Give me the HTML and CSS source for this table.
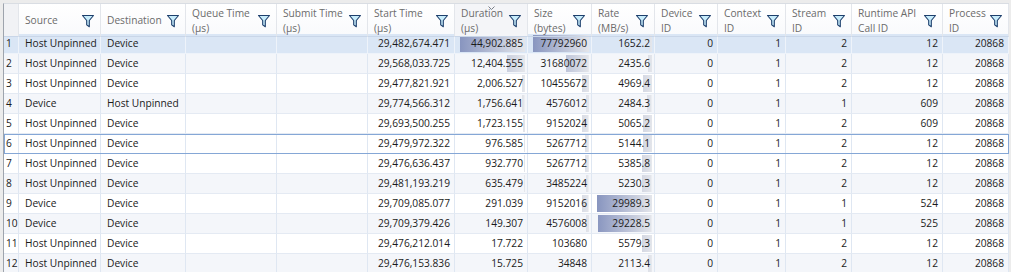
FILE: index.html
```html
<!DOCTYPE html>
<html lang="en">
<head>
    <meta charset="UTF-8">
    <title>Memcpy Transfers</title>
    <link rel="stylesheet" href="styles.css">
</head>
<body>
    <div class="grid">
        <div class="head">
            <div class="hcell corner"></div>
            <div class="hcell"><span class="htext">Source</span><svg class="filter" viewBox="0 0 14 14"><path d="M1.5 1.5h11l-4.2 5v6.2l-2.6-1.8v-4.4z"/></svg></div>
            <div class="hcell"><span class="htext">Destination</span><svg class="filter" viewBox="0 0 14 14"><path d="M1.5 1.5h11l-4.2 5v6.2l-2.6-1.8v-4.4z"/></svg></div>
            <div class="hcell"><span class="htext two">Queue Time<br>(µs)</span><svg class="filter" viewBox="0 0 14 14"><path d="M1.5 1.5h11l-4.2 5v6.2l-2.6-1.8v-4.4z"/></svg></div>
            <div class="hcell"><span class="htext two">Submit Time<br>(µs)</span><svg class="filter" viewBox="0 0 14 14"><path d="M1.5 1.5h11l-4.2 5v6.2l-2.6-1.8v-4.4z"/></svg></div>
            <div class="hcell"><span class="htext two">Start Time<br>(µs)</span><svg class="filter" viewBox="0 0 14 14"><path d="M1.5 1.5h11l-4.2 5v6.2l-2.6-1.8v-4.4z"/></svg></div>
            <div class="hcell sorted"><svg class="sort" viewBox="0 0 7 4"><path d="M0.5 0.5l3 3 3-3"/></svg><span class="htext two">Duration<br>(µs)</span><svg class="filter" viewBox="0 0 14 14"><path d="M1.5 1.5h11l-4.2 5v6.2l-2.6-1.8v-4.4z"/></svg></div>
            <div class="hcell"><span class="htext two">Size<br>(bytes)</span><svg class="filter" viewBox="0 0 14 14"><path d="M1.5 1.5h11l-4.2 5v6.2l-2.6-1.8v-4.4z"/></svg></div>
            <div class="hcell"><span class="htext two">Rate<br>(MB/s)</span><svg class="filter" viewBox="0 0 14 14"><path d="M1.5 1.5h11l-4.2 5v6.2l-2.6-1.8v-4.4z"/></svg></div>
            <div class="hcell"><span class="htext two">Device<br>ID</span><svg class="filter" viewBox="0 0 14 14"><path d="M1.5 1.5h11l-4.2 5v6.2l-2.6-1.8v-4.4z"/></svg></div>
            <div class="hcell"><span class="htext two">Context<br>ID</span><svg class="filter" viewBox="0 0 14 14"><path d="M1.5 1.5h11l-4.2 5v6.2l-2.6-1.8v-4.4z"/></svg></div>
            <div class="hcell"><span class="htext two">Stream<br>ID</span><svg class="filter" viewBox="0 0 14 14"><path d="M1.5 1.5h11l-4.2 5v6.2l-2.6-1.8v-4.4z"/></svg></div>
            <div class="hcell"><span class="htext two">Runtime API<br>Call ID</span><svg class="filter" viewBox="0 0 14 14"><path d="M1.5 1.5h11l-4.2 5v6.2l-2.6-1.8v-4.4z"/></svg></div>
            <div class="hcell"><span class="htext two">Process<br>ID</span><svg class="filter" viewBox="0 0 14 14"><path d="M1.5 1.5h11l-4.2 5v6.2l-2.6-1.8v-4.4z"/></svg></div>
        </div>

        <div class="row selected">
            <div class="cell idx">1</div><div class="cell">Host Unpinned</div><div class="cell">Device</div><div class="cell"></div><div class="cell"></div>
            <div class="cell num">29,482,674.471</div>
            <div class="cell bars dur"><span class="bar" style="width:100%"></span><span class="val">44,902.885</span></div>
            <div class="cell bars size"><span class="bar" style="width:100%"></span><span class="val">77792960</span></div>
            <div class="cell bars rate"><span class="bar" style="width:5.5%"></span><span class="val">1652.2</span></div>
            <div class="cell num">0</div><div class="cell num">1</div><div class="cell num">2</div><div class="cell num">12</div><div class="cell num">20868</div>
        </div>
        <div class="row alt">
            <div class="cell idx">2</div><div class="cell">Host Unpinned</div><div class="cell">Device</div><div class="cell"></div><div class="cell"></div>
            <div class="cell num">29,568,033.725</div>
            <div class="cell bars dur"><span class="bar" style="width:27.6%"></span><span class="val">12,404.555</span></div>
            <div class="cell bars size"><span class="bar" style="width:40.7%"></span><span class="val">31680072</span></div>
            <div class="cell bars rate"><span class="bar" style="width:8.1%"></span><span class="val">2435.6</span></div>
            <div class="cell num">0</div><div class="cell num">1</div><div class="cell num">2</div><div class="cell num">12</div><div class="cell num">20868</div>
        </div>
        <div class="row">
            <div class="cell idx">3</div><div class="cell">Host Unpinned</div><div class="cell">Device</div><div class="cell"></div><div class="cell"></div>
            <div class="cell num">29,477,821.921</div>
            <div class="cell bars dur"><span class="bar" style="width:4.5%"></span><span class="val">2,006.527</span></div>
            <div class="cell bars size"><span class="bar" style="width:13.4%"></span><span class="val">10455672</span></div>
            <div class="cell bars rate"><span class="bar" style="width:16.6%"></span><span class="val">4969.4</span></div>
            <div class="cell num">0</div><div class="cell num">1</div><div class="cell num">2</div><div class="cell num">12</div><div class="cell num">20868</div>
        </div>
        <div class="row alt">
            <div class="cell idx">4</div><div class="cell">Device</div><div class="cell">Host Unpinned</div><div class="cell"></div><div class="cell"></div>
            <div class="cell num">29,774,566.312</div>
            <div class="cell bars dur"><span class="bar" style="width:3.9%"></span><span class="val">1,756.641</span></div>
            <div class="cell bars size"><span class="bar" style="width:5.9%"></span><span class="val">4576012</span></div>
            <div class="cell bars rate"><span class="bar" style="width:8.3%"></span><span class="val">2484.3</span></div>
            <div class="cell num">0</div><div class="cell num">1</div><div class="cell num">1</div><div class="cell num">609</div><div class="cell num">20868</div>
        </div>
        <div class="row">
            <div class="cell idx">5</div><div class="cell">Host Unpinned</div><div class="cell">Device</div><div class="cell"></div><div class="cell"></div>
            <div class="cell num">29,693,500.255</div>
            <div class="cell bars dur"><span class="bar" style="width:3.8%"></span><span class="val">1,723.155</span></div>
            <div class="cell bars size"><span class="bar" style="width:11.8%"></span><span class="val">9152024</span></div>
            <div class="cell bars rate"><span class="bar" style="width:16.9%"></span><span class="val">5065.2</span></div>
            <div class="cell num">0</div><div class="cell num">1</div><div class="cell num">2</div><div class="cell num">609</div><div class="cell num">20868</div>
        </div>
        <div class="row focus">
            <div class="cell idx">6</div><div class="cell">Host Unpinned</div><div class="cell">Device</div><div class="cell"></div><div class="cell"></div>
            <div class="cell num">29,479,972.322</div>
            <div class="cell bars dur"><span class="bar" style="width:2.2%"></span><span class="val">976.585</span></div>
            <div class="cell bars size"><span class="bar" style="width:6.8%"></span><span class="val">5267712</span></div>
            <div class="cell bars rate"><span class="bar" style="width:17.2%"></span><span class="val">5144.1</span></div>
            <div class="cell num">0</div><div class="cell num">1</div><div class="cell num">2</div><div class="cell num">12</div><div class="cell num">20868</div>
        </div>
        <div class="row">
            <div class="cell idx">7</div><div class="cell">Host Unpinned</div><div class="cell">Device</div><div class="cell"></div><div class="cell"></div>
            <div class="cell num">29,476,636.437</div>
            <div class="cell bars dur"><span class="bar" style="width:2.1%"></span><span class="val">932.770</span></div>
            <div class="cell bars size"><span class="bar" style="width:6.8%"></span><span class="val">5267712</span></div>
            <div class="cell bars rate"><span class="bar" style="width:18%"></span><span class="val">5385.8</span></div>
            <div class="cell num">0</div><div class="cell num">1</div><div class="cell num">2</div><div class="cell num">12</div><div class="cell num">20868</div>
        </div>
        <div class="row alt">
            <div class="cell idx">8</div><div class="cell">Host Unpinned</div><div class="cell">Device</div><div class="cell"></div><div class="cell"></div>
            <div class="cell num">29,481,193.219</div>
            <div class="cell bars dur"><span class="bar" style="width:1.4%"></span><span class="val">635.479</span></div>
            <div class="cell bars size"><span class="bar" style="width:4.5%"></span><span class="val">3485224</span></div>
            <div class="cell bars rate"><span class="bar" style="width:17.4%"></span><span class="val">5230.3</span></div>
            <div class="cell num">0</div><div class="cell num">1</div><div class="cell num">2</div><div class="cell num">12</div><div class="cell num">20868</div>
        </div>
        <div class="row">
            <div class="cell idx">9</div><div class="cell">Device</div><div class="cell">Device</div><div class="cell"></div><div class="cell"></div>
            <div class="cell num">29,709,085.077</div>
            <div class="cell bars dur"><span class="bar" style="width:0.6%"></span><span class="val">291.039</span></div>
            <div class="cell bars size"><span class="bar" style="width:11.8%"></span><span class="val">9152016</span></div>
            <div class="cell bars rate"><span class="bar" style="width:100%"></span><span class="val">29989.3</span></div>
            <div class="cell num">0</div><div class="cell num">1</div><div class="cell num">1</div><div class="cell num">524</div><div class="cell num">20868</div>
        </div>
        <div class="row alt">
            <div class="cell idx">10</div><div class="cell">Device</div><div class="cell">Device</div><div class="cell"></div><div class="cell"></div>
            <div class="cell num">29,709,379.426</div>
            <div class="cell bars dur"><span class="bar" style="width:0.3%"></span><span class="val">149.307</span></div>
            <div class="cell bars size"><span class="bar" style="width:5.9%"></span><span class="val">4576008</span></div>
            <div class="cell bars rate"><span class="bar" style="width:97.5%"></span><span class="val">29228.5</span></div>
            <div class="cell num">0</div><div class="cell num">1</div><div class="cell num">1</div><div class="cell num">525</div><div class="cell num">20868</div>
        </div>
        <div class="row">
            <div class="cell idx">11</div><div class="cell">Host Unpinned</div><div class="cell">Device</div><div class="cell"></div><div class="cell"></div>
            <div class="cell num">29,476,212.014</div>
            <div class="cell bars dur"><span class="bar" style="width:0"></span><span class="val">17.722</span></div>
            <div class="cell bars size"><span class="bar" style="width:0.1%"></span><span class="val">103680</span></div>
            <div class="cell bars rate"><span class="bar" style="width:18.6%"></span><span class="val">5579.3</span></div>
            <div class="cell num">0</div><div class="cell num">1</div><div class="cell num">2</div><div class="cell num">12</div><div class="cell num">20868</div>
        </div>
        <div class="row alt">
            <div class="cell idx">12</div><div class="cell">Host Unpinned</div><div class="cell">Device</div><div class="cell"></div><div class="cell"></div>
            <div class="cell num">29,476,153.836</div>
            <div class="cell bars dur"><span class="bar" style="width:0"></span><span class="val">15.725</span></div>
            <div class="cell bars size"><span class="bar" style="width:0"></span><span class="val">34848</span></div>
            <div class="cell bars rate"><span class="bar" style="width:7%"></span><span class="val">2113.4</span></div>
            <div class="cell num">0</div><div class="cell num">1</div><div class="cell num">2</div><div class="cell num">12</div><div class="cell num">20868</div>
        </div>
    </div>
</body>
</html>
```

FILE: styles.css
```css
body {
    margin: 0;
    background-color: #ececec;
    font-family: "Open Sans", "Liberation Sans", sans-serif;
    font-size: 10.2px;
    color: #1b1b1b;
    overflow: hidden;
}
.grid {
    margin: 3px 0 0 3px;
    border-left: 1px solid #9ea4ad;
    border-top: 1px solid #d9dde3;
    background-color: white;
    width: 1005px;
}
.head,
.row {
    display: grid;
    grid-template-columns: 15px 82px 85px 91px 91px 87px 73px 64px 63px 63px 68px 66px 91px 66px;
}
.head {
    height: 30px;
    background: linear-gradient(#ffffff, #f9fafc);
}
.hcell {
    position: relative;
    display: flex;
    align-items: center;
    justify-content: space-between;
    padding: 0 5px 0 6px;
    border-right: 1px solid #e3e6eb;
    border-bottom: 1px solid #c9d6e8;
    color: #6b6b6b;
    line-height: 15px;
    white-space: nowrap;
    box-sizing: border-box;
}
.hcell.corner {
    background-color: #f1f2f5;
}
.hcell.sorted {
    background-color: #f4f5f8;
}
.htext.two {
    padding-top: 2px;
}
.filter {
    width: 14px;
    height: 14px;
    flex-shrink: 0;
    margin-top: 1px;
}
.filter path {
    fill: #c7ecfb;
    stroke: #1d3f6c;
    stroke-width: 1.1;
    stroke-linejoin: round;
}
.sort {
    position: absolute;
    top: 2px;
    left: 33px;
    width: 7px;
    height: 4px;
}
.sort path {
    fill: none;
    stroke: #7a7f88;
    stroke-width: 1;
}
.row {
    height: 20px;
    background-color: white;
}
.row.alt {
    background-color: #f4f6fa;
}
.row.selected {
    background-color: #dae6f5;
}
.row.focus {
    outline: 1px solid #85a7d6;
    outline-offset: -1px;
}
.cell {
    padding: 0 4px 0 6px;
    border-right: 1px solid #dfe7f2;
    border-bottom: 1px solid #e4eaf3;
    line-height: 19px;
    white-space: nowrap;
    overflow: hidden;
    box-sizing: border-box;
}
.row.selected .cell {
    border-color: #eef3fa;
}
.cell.idx {
    padding: 0 0 0 2px;
}
.cell.num {
    text-align: right;
}
.cell.bars {
    display: grid;
    padding: 1px 2px 1px 5px;
    line-height: 17px;
}
.bars > span {
    grid-area: 1 / 1;
    justify-self: end;
}
.bar {
    height: 17px;
    background-image: linear-gradient(to right, #8895bf, #e4e6eb);
    background-size: var(--track) 100%;
    background-position: right center;
}
.val {
    padding-right: 2px;
}
.dur {
    --track: 65px;
}
.size {
    --track: 56px;
}
.rate {
    --track: 55px;
}
```
